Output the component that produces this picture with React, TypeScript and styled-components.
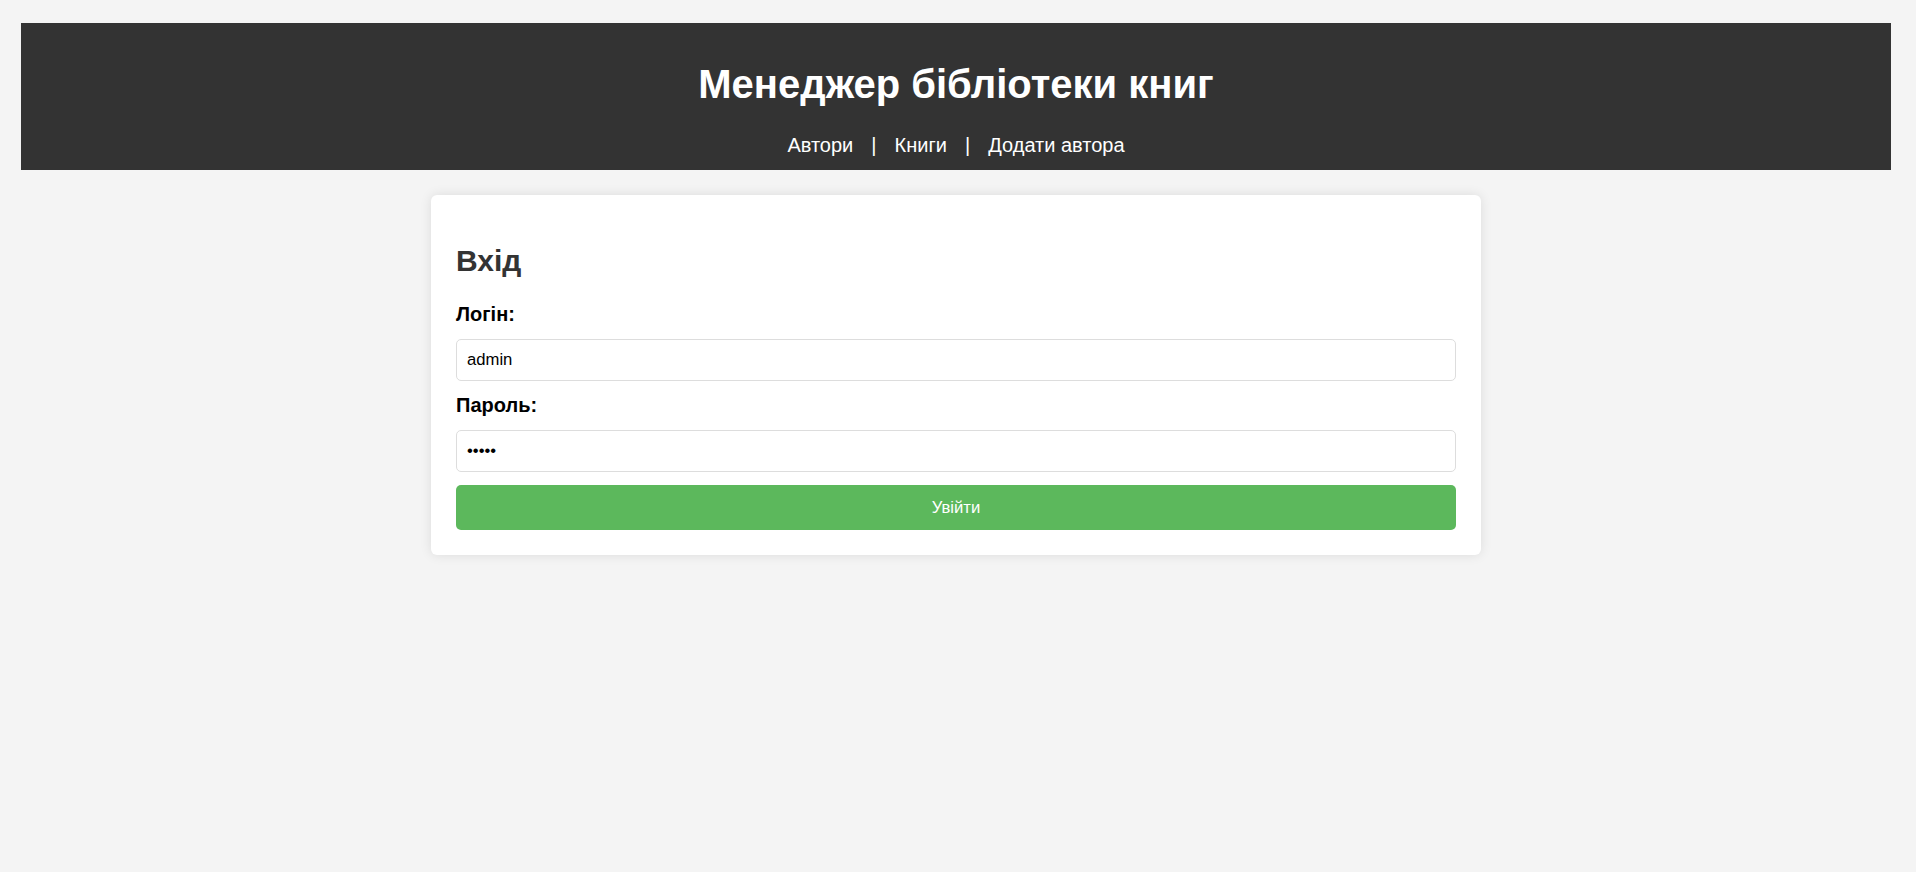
import React from "react";
import styled, { createGlobalStyle } from "styled-components";

const GlobalStyle = createGlobalStyle`
  html, body {
    margin: 0;
    padding: 0;
    background: #f4f4f4;
  }
  body {
    font-family: "Liberation Sans", Arial, sans-serif;
  }
  * { box-sizing: border-box; }
`;

const Page = styled.div`
  padding: 23px 25px 0 21px;
  min-height: 872px;
`;

const Header = styled.header`
  background: #333333;
  color: #ffffff;
  padding: 12.5px;
  text-align: center;
`;

const Title = styled.h1`
  font-size: 40px;
  font-weight: bold;
  line-height: normal;
  margin: 26.8px 0;
`;

const Nav = styled.nav`
  font-size: 20px;
  line-height: normal;
`;

const NavLink = styled.a`
  color: #ffffff;
  text-decoration: none;
  margin: 0 12.5px;
`;

const Card = styled.main`
  max-width: 1050px;
  margin: 25px auto 0;
  padding: 25px;
  background: #ffffff;
  border-radius: 6px;
  box-shadow: 0 0 12px rgba(0, 0, 0, 0.1);
`;

const Heading = styled.h2`
  font-size: 30px;
  font-weight: bold;
  color: #333333;
  line-height: normal;
  margin: 24px 0 25.2px;
`;

const Form = styled.form`
  display: flex;
  flex-direction: column;
`;

const Label = styled.label`
  display: block;
  font-size: 20px;
  font-weight: bold;
  color: #000000;
  line-height: 23px;
  margin-bottom: 13.3px;
`;

const Input = styled.input`
  display: block;
  width: 100%;
  height: 41.6px;
  padding: 0 10px;
  border: 1px solid #dddddd;
  border-radius: 5px;
  font-family: "Liberation Sans", Arial, sans-serif;
  font-size: 16.67px;
  color: #000000;
  background: #ffffff;
  margin-bottom: 13.3px;
  outline: none;
`;

const Button = styled.button`
  display: block;
  width: 100%;
  height: 44.7px;
  border: none;
  border-radius: 5px;
  background: #5cb85c;
  color: #ffffff;
  font-family: "Liberation Sans", Arial, sans-serif;
  font-size: 16.67px;
  cursor: pointer;
`;

export default function App() {
  return (
    <>
      <GlobalStyle />
      <Page>
        <Header>
          <Title>Менеджер бібліотеки книг</Title>
          <Nav>
            <NavLink href="#">Автори</NavLink>
            {" | "}
            <NavLink href="#">Книги</NavLink>
            {" | "}
            <NavLink href="#">Додати автора</NavLink>
          </Nav>
        </Header>
        <Card>
          <Heading>Вхід</Heading>
          <Form onSubmit={(e) => e.preventDefault()}>
            <Label htmlFor="login">Логін:</Label>
            <Input id="login" type="text" defaultValue="admin" />
            <Label htmlFor="password">Пароль:</Label>
            <Input id="password" type="password" defaultValue="admin" />
            <Button type="submit">Увійти</Button>
          </Form>
        </Card>
      </Page>
    </>
  );
}
